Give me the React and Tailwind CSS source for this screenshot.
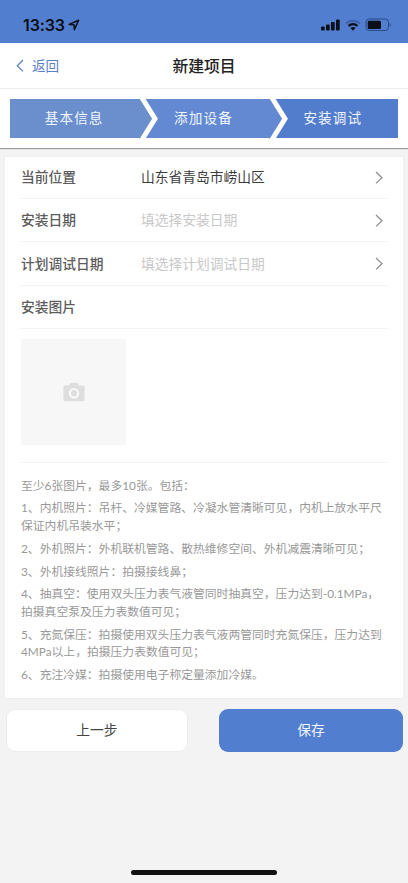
import React from 'react';

const steps = [
  { label: '基本信息', className: 'bg-[#6a8fcc]' },
  { label: '添加设备', className: 'bg-[#6289d2]' },
  { label: '安装调试', className: 'bg-[#517dcc]' },
];

const fields = [
  { label: '当前位置', value: '山东省青岛市崂山区' },
  { label: '安装日期', placeholder: '填选择安装日期' },
  { label: '计划调试日期', placeholder: '填选择计划调试日期' },
];

const notes = [
  ['至少6张图片，最多10张。包括：'],
  ['1、内机照片：吊杆、冷媒管路、冷凝水管清晰可见，内机上放水平尺', '保证内机吊装水平；'],
  ['2、外机照片：外机联机管路、散热维修空间、外机减震清晰可见；'],
  ['3、外机接线照片：拍摄接线鼻；'],
  ['4、抽真空：使用双头压力表气液管同时抽真空，压力达到-0.1MPa，', '拍摄真空泵及压力表数值可见；'],
  ['5、充氮保压：拍摄使用双头压力表气液两管同时充氮保压，压力达到', '4MPa以上，拍摄压力表数值可见；'],
  ['6、充注冷媒：拍摄使用电子称定量添加冷媒。'],
];

function StatusBar() {
  return (
    <div className="flex h-[43px] items-center bg-[#527ecf] pt-[6px] pr-[16.5px] pl-[23px] text-[#0b0f18]">
      <span className="font-['Inter'] text-[16px] font-semibold tracking-[-0.1px]">13:33</span>
      <svg className="ml-[3px]" width="12" height="12" viewBox="0 0 12 12" fill="none">
        <path d="M1.2 5.4L10.6 1.2L6.4 10.6L6 5.8Z" stroke="currentColor" strokeWidth="1.5" strokeLinejoin="round" />
      </svg>
      <div className="ml-auto flex items-center">
        <svg width="19" height="12" viewBox="0 0 19 12" fill="currentColor">
          <rect x="0" y="7.5" width="3.7" height="4" rx="1" />
          <rect x="5" y="5.5" width="3.7" height="6" rx="1" />
          <rect x="10" y="3" width="3.7" height="8.5" rx="1" />
          <rect x="15" y="0.5" width="3.7" height="11" rx="1" />
        </svg>
        <svg className="ml-[5px]" width="16" height="12" viewBox="0 0 16 12" fill="none">
          <path d="M1.2 4.5C5 .7 11 .7 14.8 4.5" stroke="#3d63a8" strokeWidth="2" />
          <path d="M3.5 7C6 4.5 10 4.5 12.5 7" stroke="currentColor" strokeWidth="2.2" />
          <path d="M5.4 9.1C6.9 7.6 9.1 7.6 10.6 9.1L8 11.8Z" fill="currentColor" />
        </svg>
        <svg className="ml-[4px]" width="27" height="14" viewBox="0 0 27 14" fill="none">
          <rect x="1" y="1" width="22.5" height="11.5" rx="3.2" stroke="#294a87" />
          <rect x="2.7" y="2.7" width="13.3" height="8.2" rx="1.5" fill="currentColor" />
          <path d="M24.7 5C26.3 5.6 26.3 8 24.7 8.6Z" fill="#294a87" />
        </svg>
      </div>
    </div>
  );
}

function NavBar() {
  return (
    <div className="grid h-[46px] grid-cols-3 items-center border-b border-[#ededed] bg-white px-[16px]">
      <button className="flex items-center text-[13.6px] text-[#5b80c4]">
        <svg width="8" height="13" viewBox="0 0 8 13" fill="none">
          <path d="M7 1L1.3 6.7L7 12.4" stroke="currentColor" strokeWidth="1.3" />
        </svg>
        <span className="ml-[8px]">返回</span>
      </button>
      <h1 className="text-center text-[15.8px] font-medium text-[#222]">新建项目</h1>
    </div>
  );
}

function Steps() {
  return (
    <div className="h-[59px] bg-white px-[10px] pt-[9.5px] shadow-[0_1px_1px_#9b9b9b]">
      <div className="grid h-[39.5px] grid-cols-3">
        {steps.map((step, i) => (
          <div
            key={step.label}
            className={`relative flex items-center justify-center pb-[2px] text-[13.6px] tracking-[1.1px] text-[#f2f6fd] ${step.className}`}
          >
            {i > 0 && (
              <svg className="absolute top-[-4px] left-0" width="20" height="48" viewBox="0 0 20 48" fill="none">
                <path d="M0 4H4L16 23.5L4 43.5H0Z" fill={i === 1 ? '#6a8fcc' : '#6289d2'} />
                <path d="M2.2 1.5L16 23.8L2.2 46" stroke="white" strokeWidth="5" />
              </svg>
            )}
            <span className="-ml-px">{step.label}</span>
          </div>
        ))}
      </div>
    </div>
  );
}

function FieldRow({ label, value, placeholder }) {
  return (
    <div className="flex h-[43.4px] items-center border-b border-[#f3f3f3] pb-px text-[13.75px]">
      <span className="w-[120px] font-medium text-[#5c5c5c]">{label}</span>
      <span className={value ? 'text-[#3c3c3c]' : 'text-[#c8c8c8]'}>{value || placeholder}</span>
      <svg className="mt-[2px] mr-[4px] ml-auto" width="8" height="13" viewBox="0 0 8 13" fill="none">
        <path d="M1 1L7 6.7L1 12.4" stroke="#8b8b8b" strokeWidth="1.2" />
      </svg>
    </div>
  );
}

export default function App() {
  return (
    <div className="flex h-[883px] w-[408px] flex-col overflow-hidden bg-[#f3f3f3] font-['Noto_Sans_CJK_SC',sans-serif]">
      <StatusBar />
      <NavBar />
      <Steps />

      <div className="mx-[5px] mt-[9px] h-[541px] bg-white px-[16px] shadow-[0_0_2px_#e6e6e6]">
        <div className="-mt-[1.5px]">
          {fields.map((field) => (
            <FieldRow key={field.label} {...field} />
          ))}
          <div className="flex h-[43.4px] items-center border-b border-[#f3f3f3] pb-px text-[13.75px] font-medium text-[#5c5c5c]">
            安装图片
          </div>
        </div>
        <div className="h-[133.5px] border-b border-[#f3f3f3] pt-[10px]">
          <button className="flex h-[106px] w-[105px] items-center justify-center bg-[#f7f7f7]">
            <svg width="22" height="20" viewBox="0 0 22 20" fill="none">
              <path
                d="M1.2 3.5H6L7.2 1.4Q7.6 .8 8.3 .8H13.7Q14.4 .8 14.8 1.4L16 3.5H20.8Q21.5 3.5 21.5 4.2V18.6Q21.5 19.3 20.8 19.3H1.2Q.5 19.3 .5 18.6V4.2Q.5 3.5 1.2 3.5Z"
                fill="#dedede"
              />
              <circle cx="11" cy="11.2" r="4.2" stroke="#fafafa" strokeWidth="2.2" />
            </svg>
          </button>
        </div>
        <div className="flex flex-col gap-[5.2px] pt-[14px] font-['Lato','Noto_Sans_CJK_SC',sans-serif] text-[11.8px] leading-[17.6px] text-[#999]">
          {notes.map((lines) => (
            <p key={lines[0]} className="whitespace-nowrap">
              {lines.map((line) => (
                <span key={line} className="block">{line}</span>
              ))}
            </p>
          ))}
        </div>
      </div>

      <div className="mt-[11px] flex justify-between pr-[5px] pl-[6px] text-[13.75px]">
        <button className="h-[43px] w-[182px] rounded-[9px] border border-[#ececec] bg-white pb-[2px] text-[#444]">上一步</button>
        <button className="h-[43px] w-[184px] rounded-[9px] bg-[#527ecf] pb-[2px] text-[#f2f6fd]">保存</button>
      </div>

      <div className="mx-auto mt-auto mb-[8px] h-[5px] w-[146px] rounded-full bg-[#111]" />
    </div>
  );
}
